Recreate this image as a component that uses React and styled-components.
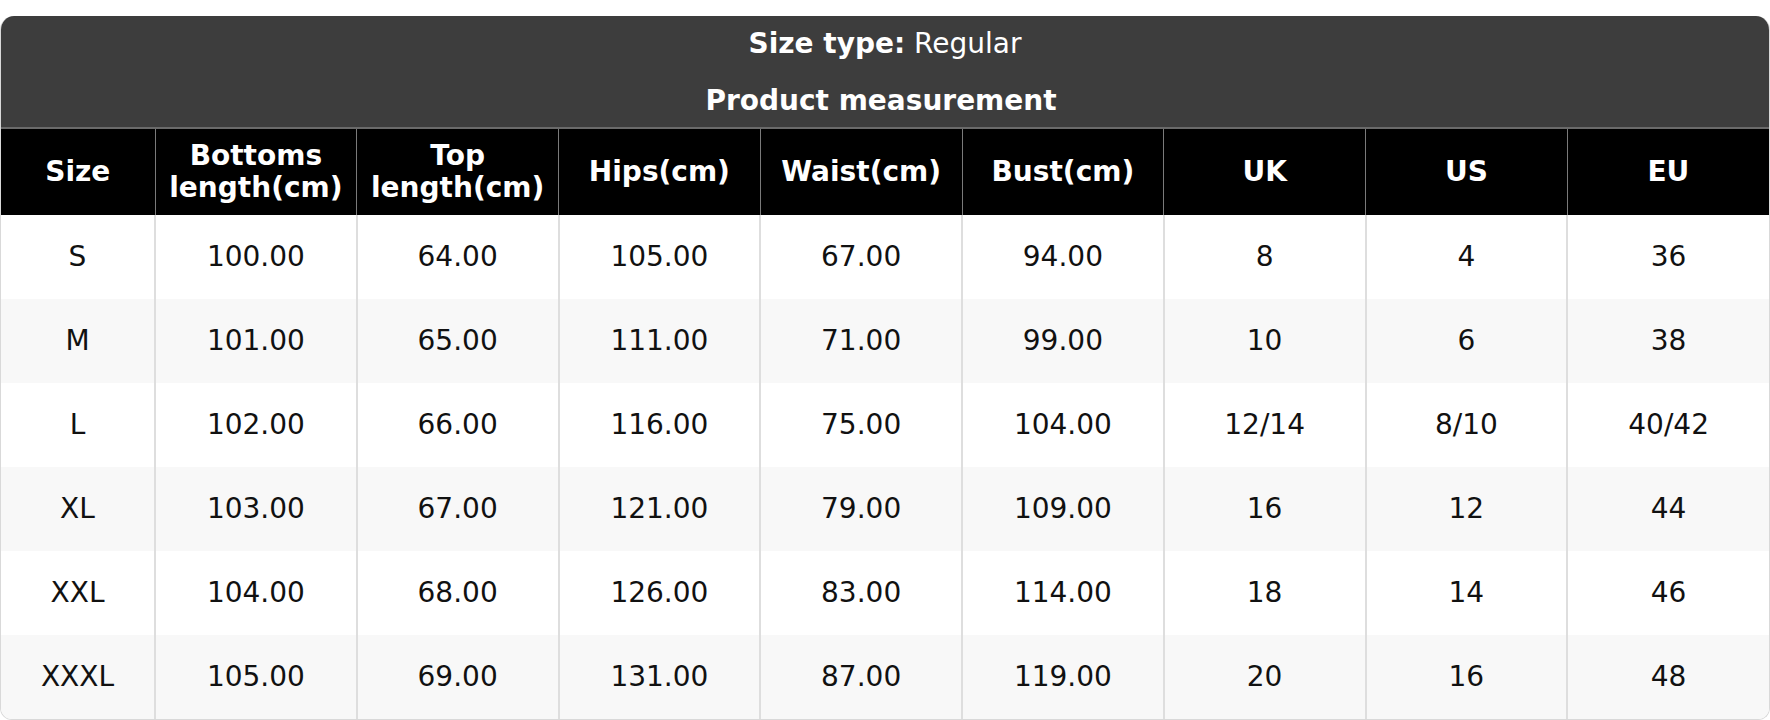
import React from 'react';
import styled, { createGlobalStyle } from 'styled-components';

const GlobalStyle = createGlobalStyle`
  html, body {
    margin: 0;
    padding: 0;
    background: #ffffff;
    font-family: "DejaVu Sans", Verdana, sans-serif;
  }
  body {
    padding-top: 16px;
  }
`;

const Card = styled.div`
  width: 1770px;
  box-sizing: border-box;
  border-radius: 14px 14px 12px 12px;
  overflow: hidden;
  border: 1px solid #d9d9d9;
  border-top: none;
  background: #ffffff;
`;

const Banner = styled.div`
  background: #3d3d3d;
  color: #ffffff;
  text-align: center;
  padding: 12px 0 10px;
  display: flex;
  flex-direction: column;
  gap: 25px;
  font-size: 28px;
  line-height: 32px;
`;

const BannerLine = styled.div`
  font-weight: ${(p) => (p.$bold ? 700 : 400)};
  padding-right: ${(p) => (p.$bold ? '8px' : '0')};
`;

const Label = styled.strong`
  font-weight: 700;
`;

const Table = styled.table`
  width: 100%;
  border-collapse: collapse;
  table-layout: fixed;
  font-size: 28px;
  line-height: 32px;
`;

const HeadCell = styled.th`
  background: #000000;
  color: #ffffff;
  font-weight: 700;
  text-align: center;
  padding: 10px 4px;
  height: 66px;
  border-top: 2px solid #6a6a6a;
  border-left: 1px solid #7a7a7a;
  border-right: 1px solid #7a7a7a;

  &:first-child {
    border-left: none;
  }
  &:last-child {
    border-right: none;
  }
`;

const Row = styled.tr`
  background: ${(p) => (p.$alt ? '#f8f8f8' : '#ffffff')};
`;

const Cell = styled.td`
  color: #111111;
  text-align: center;
  height: 84px;
  padding: 0 4px;
  border-left: 2px solid #dedede;
  border-right: 2px solid #dedede;

  &:first-child {
    border-left: none;
  }
  &:last-child {
    border-right: none;
  }
`;

const COLUMNS = [
  ['Size'],
  ['Bottoms', 'length(cm)'],
  ['Top', 'length(cm)'],
  ['Hips(cm)'],
  ['Waist(cm)'],
  ['Bust(cm)'],
  ['UK'],
  ['US'],
  ['EU'],
];

const ROWS = [
  ['S', '100.00', '64.00', '105.00', '67.00', '94.00', '8', '4', '36'],
  ['M', '101.00', '65.00', '111.00', '71.00', '99.00', '10', '6', '38'],
  ['L', '102.00', '66.00', '116.00', '75.00', '104.00', '12/14', '8/10', '40/42'],
  ['XL', '103.00', '67.00', '121.00', '79.00', '109.00', '16', '12', '44'],
  ['XXL', '104.00', '68.00', '126.00', '83.00', '114.00', '18', '14', '46'],
  ['XXXL', '105.00', '69.00', '131.00', '87.00', '119.00', '20', '16', '48'],
];

export default function App() {
  return (
    <>
      <GlobalStyle />
      <Card>
        <Banner>
          <BannerLine>
            <Label>Size type:</Label> Regular
          </BannerLine>
          <BannerLine $bold>Product measurement</BannerLine>
        </Banner>
        <Table>
          <colgroup>
            <col style={{ width: '154px' }} />
            {COLUMNS.slice(1).map((c) => (
              <col key={c.join('')} />
            ))}
          </colgroup>
          <thead>
            <tr>
              {COLUMNS.map((lines) => (
                <HeadCell key={lines.join('')}>
                  {lines.map((l, i) => (
                    <React.Fragment key={l}>
                      {i > 0 && <br />}
                      {l}
                    </React.Fragment>
                  ))}
                </HeadCell>
              ))}
            </tr>
          </thead>
          <tbody>
            {ROWS.map((row, r) => (
              <Row key={row[0]} $alt={r % 2 === 1}>
                {row.map((v, i) => (
                  <Cell key={i}>{v}</Cell>
                ))}
              </Row>
            ))}
          </tbody>
        </Table>
      </Card>
    </>
  );
}
